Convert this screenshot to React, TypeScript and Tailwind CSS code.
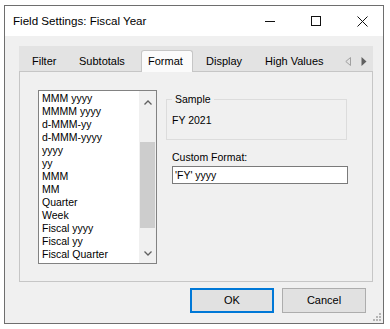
import React from 'react';

const formats = [
  'MMM yyyy',
  'MMMM yyyy',
  'd-MMM-yy',
  'd-MMM-yyyy',
  'yyyy',
  'yy',
  'MMM',
  'MM',
  'Quarter',
  'Week',
  'Fiscal yyyy',
  'Fiscal yy',
  'Fiscal Quarter',
];

function CaptionButtons() {
  return (
    <div className="ml-auto flex h-full">
      <div className="w-[46px] h-full flex items-center justify-center pl-[4px]">
        <svg width="10" height="10" viewBox="0 0 10 10">
          <path d="M0 5.5H10" stroke="#111" strokeWidth="1" />
        </svg>
      </div>
      <div className="w-[46px] h-full flex items-center justify-center pl-[4px]">
        <svg width="10" height="10" viewBox="0 0 10 10">
          <rect x="0.5" y="0.5" width="9" height="9" fill="none" stroke="#111" strokeWidth="1" />
        </svg>
      </div>
      <div className="w-[46px] h-full flex items-center justify-center pl-[4px]">
        <svg width="11" height="11" viewBox="0 0 11 11">
          <path d="M0.5 0.5L10.5 10.5M10.5 0.5L0.5 10.5" stroke="#111" strokeWidth="1" />
        </svg>
      </div>
    </div>
  );
}

function Tabs() {
  return (
    <div className="h-[25px] bg-[#e3e3e3] flex items-end text-[11px] text-black">
      <div className="w-[53px] h-[21px] flex items-center pl-[13px] pt-[1px]">Filter</div>
      <div className="w-[69px] h-[21px] flex items-center pl-[7px] pt-[1px]">Subtotals</div>
      <div className="w-[52px] h-[22px] -mb-px relative z-10 flex items-center pl-[6px] bg-[#fbfbfb] border-x border-t border-[#c6c6c6] rounded-t-[3px]">
        Format
      </div>
      <div className="w-[65px] h-[21px] flex items-center pl-[13px] pt-[1px]">Display</div>
      <div className="w-[70px] h-[21px] flex items-center pl-[7px] pt-[1px] whitespace-nowrap">High Values</div>
      <div className="ml-auto h-[21px] flex items-center gap-[10px] pr-[6px] pt-[1px]">
        <svg width="6" height="9" viewBox="0 0 6 9">
          <path d="M5.5 0.5V8.5L0.8 4.5Z" fill="none" stroke="#a0a0a0" strokeWidth="1" />
        </svg>
        <svg width="6" height="9" viewBox="0 0 6 9">
          <path d="M0.5 0V9L5.5 4.5Z" fill="#606060" />
        </svg>
      </div>
    </div>
  );
}

function FormatList() {
  return (
    <div className="w-[119px] h-[174px] border border-[#828282] bg-white flex">
      <div className="w-[100px] overflow-hidden pt-[1px] pl-[3px] text-[10.5px] leading-[13px] text-black">
        {formats.map((f) => (
          <div key={f} className="whitespace-nowrap">
            {f}
          </div>
        ))}
      </div>
      <div className="w-[17px] bg-[#f0f0f0] flex flex-col">
        <div className="h-[17px] flex items-end justify-center pb-[3px]">
          <svg width="8" height="5" viewBox="0 0 8 5">
            <path d="M0.5 4.5L4 1L7.5 4.5" fill="none" stroke="#606060" strokeWidth="1.3" />
          </svg>
        </div>
        <div className="flex-1 pt-[34px]">
          <div className="h-[86px] mx-px bg-[#cdcdcd]" />
        </div>
        <div className="h-[17px] flex items-start justify-center pt-[5px]">
          <svg width="8" height="5" viewBox="0 0 8 5">
            <path d="M0.5 0.5L4 4L7.5 0.5" fill="none" stroke="#606060" strokeWidth="1.3" />
          </svg>
        </div>
      </div>
    </div>
  );
}

export default function App() {
  return (
    <div
      className="w-[390px] h-[329px] bg-white pt-[5px] pl-[4px] overflow-hidden"
      style={{ fontFamily: '"Liberation Sans", Arial, sans-serif' }}
    >
      <div className="w-[380px] h-[319px] border border-[#6e6e6e] bg-[#f0f0f0] flex flex-col relative">
        <div className="h-[30px] bg-white flex items-center">
          <span className="pl-[8px] text-[11.6px] text-black">Field Settings: Fiscal Year</span>
          <CaptionButtons />
        </div>

        <div className="pl-[14px] pt-[10px]">
          <div className="w-[354px]">
            <Tabs />
            <div className="h-[211px] border border-[#c6c6c6] bg-[#f0f0f0] flex pl-[18px] pt-[18px]">
              <FormatList />
              <div className="ml-[9px] flex flex-col">
                <div className="mt-[9px] w-[181px] h-[41px] border border-[#dcdcdc] relative pl-[5px] pt-[14px] text-[10.5px] leading-[13px] text-black">
                  <span className="absolute left-[5px] top-[-7px] px-[3px] bg-[#f0f0f0]">Sample</span>
                  FY 2021
                </div>
                <div className="ml-[6px] mt-[11px] text-[10.5px] leading-[13px] text-black">Custom Format:</div>
                <div className="ml-[6px] mt-[2px] w-[176px] h-[18px] border border-[#7a7a7a] bg-white pl-[2px] text-[10.5px] leading-[16px] text-black">
                  'FY' yyyy
                </div>
              </div>
            </div>
          </div>
        </div>

        <div className="flex justify-end gap-[8px] pr-[17px] mt-[6px] text-[11px] text-black">
          <button className="w-[84px] h-[25px] border-2 border-[#0078d7] bg-[#e1e1e1] flex items-center justify-center">
            OK
          </button>
          <button className="w-[84px] h-[25px] border border-[#adadad] bg-[#e1e1e1] flex items-center justify-center">
            Cancel
          </button>
        </div>

        <svg className="absolute right-[2px] bottom-[2px]" width="8" height="8" viewBox="0 0 8 8">
          <rect x="6" y="0" width="2" height="2" fill="#b5b5b5" />
          <rect x="3" y="3" width="2" height="2" fill="#b5b5b5" />
          <rect x="6" y="3" width="2" height="2" fill="#b5b5b5" />
          <rect x="0" y="6" width="2" height="2" fill="#b5b5b5" />
          <rect x="3" y="6" width="2" height="2" fill="#b5b5b5" />
          <rect x="6" y="6" width="2" height="2" fill="#b5b5b5" />
        </svg>
      </div>
    </div>
  );
}
